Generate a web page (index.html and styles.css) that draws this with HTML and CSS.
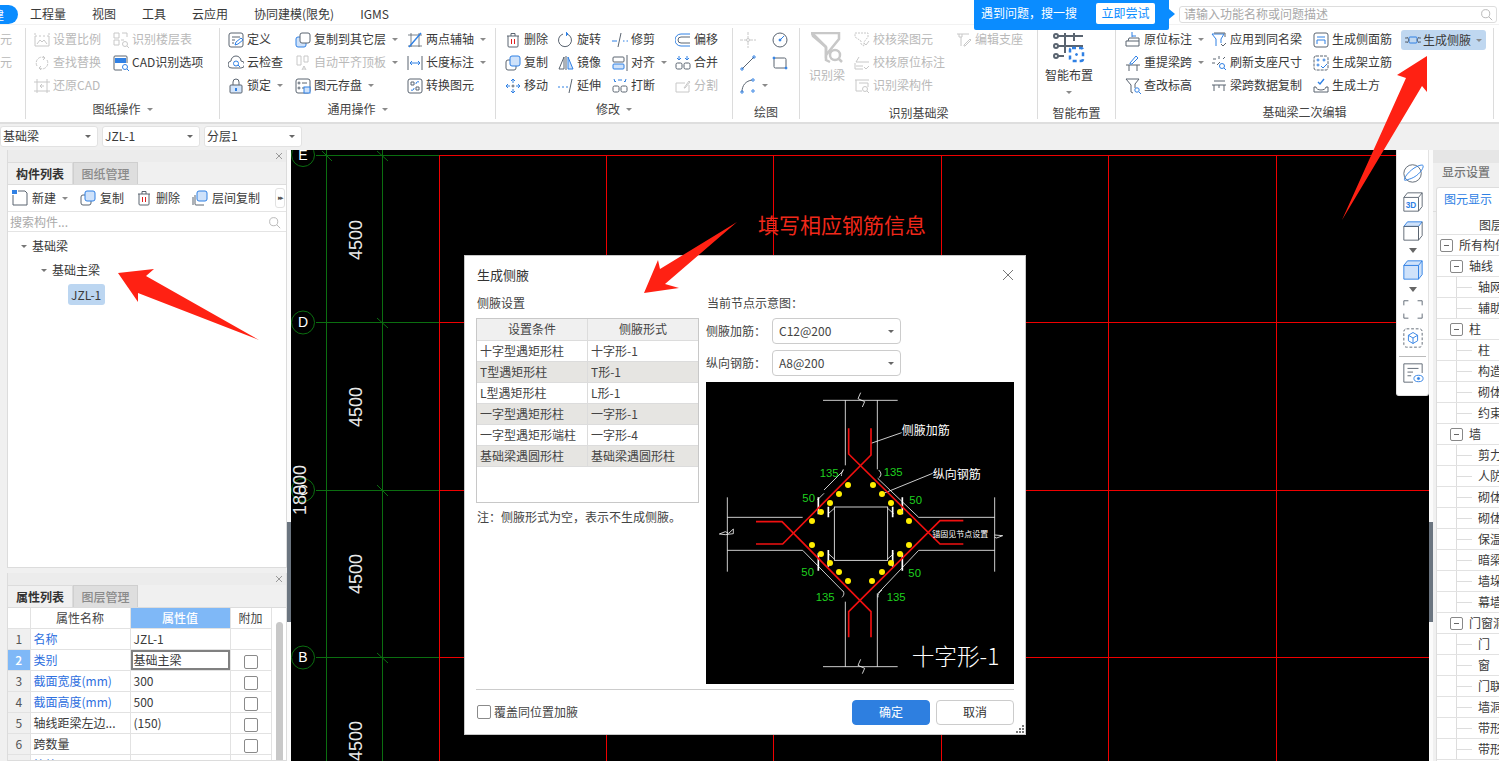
FILE: index.html
```html
<!DOCTYPE html>
<html lang="zh-CN">
<head>
<meta charset="utf-8">
<title>生成侧腋</title>
<link rel="stylesheet" href="styles.css">
</head>
<body>
<svg class="sprite" aria-hidden="true">
<defs>
<symbol id="scale" viewBox="0 0 16 16"><path d="M1 4h2M5 4h2M9 4h2M13 4h2M1 4v10h14V4M1 1v2M15 1v2"/><path d="M3 12l3-4 2 2 2-2 3 4"/></symbol>
<symbol id="layers" viewBox="0 0 16 16"><path d="M1 1h5v5H1zM9 1h5v4M1 8h5v5H1zM8 8h3"/><circle cx="12" cy="12" r="2.5"/><path d="M14 14l2 2"/></symbol>
<symbol id="findrep" viewBox="0 0 16 16"><path d="M3 11A6 6 0 0 1 8 2l2 1M13 5a6 6 0 0 1-5 9l-2-1" stroke-dasharray="3 1"/><path d="M9 1l2 2-2 2M7 11l-2 2 2 2"/></symbol>
<symbol id="restore" viewBox="0 0 16 16"><path d="M3 1v14M13 1v14M0 4h16M0 13h16"/><path d="M10 8H6l2-2M6 8l2 2"/></symbol>
<symbol id="autoalign" viewBox="0 0 16 16"><path d="M2 1h4v9H2zM9 1h4v6H9z"/><path d="M7 15l2-4 2 4M8 14h2"/></symbol>
<symbol id="split" viewBox="0 0 16 16"><path d="M1 5h9M1 5v9h13V7"/><path d="M9 10l5-7 1 1-5 6z"/></symbol>
<symbol id="ckbeam" viewBox="0 0 16 16"><path d="M1 1h13v4l-4 5v4l-3-2V9L1 5z" stroke-dasharray="2 1"/><path d="M10 11l2 2 3-4"/></symbol>
<symbol id="ckmark" viewBox="0 0 16 16"><path d="M5 2L2 7h13M1 8v6h8M2 11h7"/><path d="M10 12l2 2 3-3"/></symbol>
<symbol id="idbeam" viewBox="0 0 16 16"><path d="M1 2h14M2 2v11h6M5 5h9v4"/><circle cx="11" cy="11" r="2.5"/><path d="M13 13l2 2"/></symbol>
<symbol id="edsup" viewBox="0 0 16 16"><path d="M1 2h12M3 2v3h3V2M5 5v9"/><path d="M8 13l6-6 1 1-6 6H8z"/></symbol>
<symbol id="define" viewBox="0 0 16 16"><rect x="1" y="1" width="14" height="14" rx="2"/><path d="M4 5h8M4 8h3M4 11h2"/><path d="M7 13l1-3 5-4 2 2-5 4z" stroke="#2f80e4"/></symbol>
<symbol id="cloud" viewBox="0 0 16 16"><path d="M4 13a3.5 3.5 0 0 1-1-7 5 5 0 0 1 10 0 3.5 3.5 0 0 1 0 7z"/><circle cx="8" cy="8.500" r="2.500" stroke="#2f80e4"/><path d="M10 10l2 2" stroke="#2f80e4"/></symbol>
<symbol id="lock" viewBox="0 0 16 16"><rect x="2" y="7" width="12" height="8" rx="1" fill="#d3e5fb"/><path d="M5 7V4a3 3 0 0 1 6 0v3"/><rect x="7" y="10" width="2" height="3" fill="#2f80e4" stroke="none"/></symbol>
<symbol id="copyl" viewBox="0 0 16 16"><rect x="1" y="5" width="10" height="10" rx="2" fill="#cfe2fa" stroke="#2f80e4"/><rect x="5" y="1" width="10" height="10" rx="2" fill="#fff"/></symbol>
<symbol id="save" viewBox="0 0 16 16"><rect x="1" y="1" width="14" height="14" rx="2"/><circle cx="4" cy="5" r="1"/><path d="M7 5h5"/><circle cx="4" cy="10" r="1"/><path d="M7 10h2"/><rect x="9" y="9" width="6" height="6" fill="#cfe2fa" stroke="#2f80e4"/></symbol>
<symbol id="twoax" viewBox="0 0 16 16"><path d="M1 3h14M1 14h14M4 1v14M12 1v14" stroke-width=".8"/><path d="M2 15L14 1" stroke="#2f80e4" stroke-width="1.400"/></symbol>
<symbol id="length" viewBox="0 0 16 16"><path d="M1 1v14M15 1v14"/><path d="M3 8h10M3 8l2-2M3 8l2 2M13 8l-2-2M13 8l-2 2" stroke="#2f80e4"/></symbol>
<symbol id="convert" viewBox="0 0 16 16"><rect x="1" y="1" width="14" height="14" rx="2"/><path d="M4 4h3v3H4zM9 9h3v3H9z"/><path d="M9 6a2 2 0 0 1 3-2M7 10a2 2 0 0 1-3 2" stroke="#2f80e4"/></symbol>
<symbol id="cadopt" viewBox="0 0 16 16"><path d="M9 15H2a1 1 0 0 1-1-1V2a1 1 0 0 1 1-1h11a1 1 0 0 1 1 1v6"/><rect x="2" y="3" width="11" height="5" fill="#2f80e4" stroke="none"/><circle cx="12" cy="12" r="2.500" stroke="#2f80e4"/><path d="M14 14l2 2" stroke="#2f80e4"/></symbol>
<symbol id="del" viewBox="0 0 16 16"><path d="M2 4h12M6 4V1.500h4V4M3 4v10a1 1 0 0 0 1 1h8a1 1 0 0 0 1-1V4"/><path d="M6.500 7v5M9.500 7v5" stroke="#e02020"/></symbol>
<symbol id="copy" viewBox="0 0 16 16"><rect x="1" y="5" width="10" height="10" rx="2" fill="#fff"/><rect x="5" y="1" width="10" height="10" rx="2" fill="#cfe2fa" stroke="#2f80e4"/></symbol>
<symbol id="copy2" viewBox="0 0 16 16"><path d="M3 5v9a1 1 0 0 0 1 1h8M1 7v8"/><rect x="5" y="1" width="10" height="10" rx="2" fill="#cfe2fa" stroke="#2f80e4"/></symbol>
<symbol id="move" viewBox="0 0 16 16"><g stroke="#2f80e4"><path d="M8 1v4M8 11v4M1 8h4M11 8h4M6 3l2-2 2 2M6 13l2 2 2-2M3 6L1 8l2 2M13 6l2 2-2 2"/></g><circle cx="8" cy="8" r="1"/></symbol>
<symbol id="rotate" viewBox="0 0 16 16"><path d="M9 2a6.500 6.500 0 1 1-4 0" /><path d="M8 0l2 2-2 2" fill="#2f80e4" stroke="#2f80e4"/></symbol>
<symbol id="mirror" viewBox="0 0 16 16"><path d="M1 14L6 2v12z"/><path d="M10 2l5 12h-5z" fill="#cfe2fa" stroke="#2f80e4"/><path d="M8 1v14"/></symbol>
<symbol id="extend" viewBox="0 0 16 16"><path d="M0 9h2M4 9h2M8 9h2" stroke="#2f80e4"/><path d="M11 15l3-14"/></symbol>
<symbol id="trim" viewBox="0 0 16 16"><path d="M0 9h5M11 9h1.500M14.500 9h1.500" stroke="#2f80e4"/><path d="M6 15l3-14"/></symbol>
<symbol id="align" viewBox="0 0 16 16"><path d="M15 0v16"/><rect x="1" y="2" width="11" height="5" rx="1"/><rect x="1" y="9" width="11" height="5" rx="1" fill="#cfe2fa" stroke="#2f80e4"/></symbol>
<symbol id="brk" viewBox="0 0 16 16"><path d="M2 1l1 3 1-1M14 1l-1 3-1-1M7 1v2M9 1v2" stroke="#2f80e4"/><rect x="1" y="8" width="6" height="6" rx="1.500"/><rect x="9" y="8" width="6" height="6" rx="1.500"/></symbol>
<symbol id="merge" viewBox="0 0 16 16"><path d="M4 1v4M2 3l2 2 2-2M12 1v4M10 3l2 2 2-2" stroke="#2f80e4"/><rect x="1" y="8" width="6" height="6" rx="1.500"/><rect x="9" y="8" width="6" height="6" rx="1.500"/></symbol>
<symbol id="offset" viewBox="0 0 16 16"><path d="M15 2H6a6 6 0 0 0 0 12h9" stroke="#2f80e4"/><path d="M15 5H6a3 3 0 0 0 0 6h9"/></symbol>
<symbol id="pt" viewBox="0 0 16 16"><path d="M0 8h6M10 8h6M8 0v6M8 10v6" stroke-dasharray="3 1"/><circle cx="8" cy="8" r="1.500"/></symbol>
<symbol id="circ" viewBox="0 0 16 16"><circle cx="8" cy="8" r="7"/><path d="M8 8l4-4" stroke="#2f80e4"/><circle cx="8" cy="8" r="1" fill="#2f80e4" stroke="#2f80e4"/></symbol>
<symbol id="line" viewBox="0 0 16 16"><path d="M2 14L14 2"/><circle cx="2" cy="14" r="1.200" stroke="#2f80e4"/><circle cx="14" cy="2" r="1.200" stroke="#2f80e4"/></symbol>
<symbol id="rect" viewBox="0 0 16 16"><rect x="2" y="3" width="12" height="10" rx="1.500"/><circle cx="2" cy="3" r="1" fill="#2f80e4" stroke="#2f80e4"/><circle cx="14" cy="13" r="1" fill="#2f80e4" stroke="#2f80e4"/></symbol>
<symbol id="arc" viewBox="0 0 16 16"><path d="M2 14C2 7 6 3 12 2"/><circle cx="2" cy="14" r="1.200" stroke="#2f80e4"/><circle cx="13" cy="2" r="1.200" stroke="#2f80e4"/><circle cx="13" cy="13" r="1.200" stroke="#2f80e4"/></symbol>
<symbol id="funnel" viewBox="0 0 32 32"><path d="M1 1h27v6L15 23v-8L2 4z" stroke-width="2.500"/><path d="M15 15v13l4 2M1 1l14 14" stroke-width="2.500"/><circle cx="24" cy="23" r="5" stroke-width="2.500"/><path d="M28 27l3 3" stroke-width="2.500"/></symbol>
<symbol id="smart" viewBox="0 0 32 32"><g stroke="#5a6470" stroke-width="2"><path d="M3 4h27M3 14h27M3 24h8M12 1v20M21 1v8"/><circle cx="3" cy="4" r="2" fill="#fff"/><circle cx="3" cy="14" r="2" fill="#fff"/><circle cx="3" cy="24" r="2" fill="#fff"/></g><rect x="17" y="16" width="13" height="13" rx="2" stroke="#2f80e4" stroke-width="2.500" stroke-dasharray="4 3" fill="#fff"/><circle cx="23.500" cy="22.500" r="1" fill="#2f80e4" stroke="#2f80e4"/></symbol>
<symbol id="orig" viewBox="0 0 16 16"><path d="M1 9h13v5H1zM3 9l1-3h10v3"/><path d="M7 0v5M7 4h4" stroke="#2f80e4"/></symbol>
<symbol id="respan" viewBox="0 0 16 16"><path d="M1 10h14M4 10v6M12 10v6"/><path d="M5 8l6-7 2 2-6 6-2 0z" stroke="#2f80e4"/></symbol>
<symbol id="chkh" viewBox="0 0 16 16"><path d="M1 1h13l-4 5v4M1 1l5 6v7l2 1"/><circle cx="12" cy="12" r="2.200" stroke="#2f80e4"/><path d="M14 14l2 2" stroke="#2f80e4"/></symbol>
<symbol id="apply" viewBox="0 0 16 16"><path d="M1 2h12l-3 5v4M1 2l4 5v7" stroke="#2f80e4"/><path d="M3 1h11v4"/><path d="M10 12l2 2 3-3"/></symbol>
<symbol id="refresh" viewBox="0 0 16 16"><path d="M2 4h3M8 1v3M12 4l2-2M1 8h3M9 7l-3 3" /><circle cx="11" cy="11" r="2.500" stroke="#2f80e4"/><path d="M13 13l2 2" stroke="#2f80e4"/></symbol>
<symbol id="spancp" viewBox="0 0 16 16"><path d="M3 3h11M1 7h14M3 7v6M13 7v6M8 7v3"/></symbol>
<symbol id="sideb" viewBox="0 0 16 16"><rect x="1" y="1" width="14" height="14" rx="2"/><path d="M4 5h8M4 8h8v4M4 8v4" stroke="#2f80e4"/></symbol>
<symbol id="erect" viewBox="0 0 16 16"><rect x="1" y="1" width="14" height="14" rx="2" stroke-dasharray="3 1"/><circle cx="5" cy="5" r="1" stroke="#2f80e4"/><circle cx="11" cy="5" r="1" stroke="#2f80e4"/><circle cx="5" cy="10" r="1" stroke="#2f80e4"/><path d="M8 11l2 2 4-4" stroke="#2f80e4"/></symbol>
<symbol id="earth" viewBox="0 0 16 16"><path d="M1 9v5h14V9M1 9h2a5 3 0 0 0 10 0h2"/><path d="M5 4l2 2 4-5" stroke="#2f80e4" stroke-width="1.400"/></symbol>
<symbol id="hau" viewBox="0 0 16 16"><path d="M0 6h2M14 6h2M0 10h2M14 10h2"/><rect x="4" y="5" width="8" height="6" rx="1" stroke="#2f80e4"/><path d="M2 5l2 3-2 3M14 5l-2 3 2 3"/></symbol>
<symbol id="newi" viewBox="0 0 16 16"><path d="M1 5v10h14V3l-2-2H6"/><rect x="0" y="0" width="5" height="4" fill="#2f80e4" stroke="none"/></symbol>
<symbol id="mag" viewBox="0 0 16 16"><circle cx="7" cy="7" r="5"/><path d="M11 11l4 4"/></symbol>
<symbol id="xmark" viewBox="0 0 8 8"><path d="M1 1l6 6M7 1L1 7"/></symbol>
<symbol id="orb" viewBox="0 0 24 24"><circle cx="11.500" cy="12.500" r="9.500"/><path d="M3 20C1 18 8 9 16 5c4-2 7-2 7-1 1 3-5 11-13 14-3 1-6 2-7 2z" stroke="#2f80e4"/></symbol>
<symbol id="cube3d" viewBox="0 0 24 24"><path d="M2 7h16v15H2zM2 7l4-5h16v15l-4 5M18 7l4-5"/><text x="4" y="19" class="ictx">3D</text></symbol>
<symbol id="cubetop" viewBox="0 0 24 24"><path d="M2 7l4-5h16l-4 5z" fill="#cfe2fa" stroke="#2f80e4"/><path d="M2 7h16v15H2zM18 7v15l4-5V2"/></symbol>
<symbol id="cubefull" viewBox="0 0 24 24"><path d="M2 7h16v15H2z" fill="#cfe2fa"/><path d="M2 7l4-5h16l-4 5zM18 7v15l4-5V2" fill="#cfe2fa"/></symbol>
<symbol id="frame" viewBox="0 0 24 24"><path d="M2 8V3h5M17 3h5v5M22 17v5h-5M7 22H2v-5"/></symbol>
<symbol id="cubedash" viewBox="0 0 24 24"><rect x="2" y="2" width="20" height="20" rx="3" stroke-dasharray="3 2"/><path d="M12 6l5 3v6l-5 3-5-3V9zM7 9l5 3 5-3M12 12v6" stroke="#2f80e4"/></symbol>
<symbol id="listeye" viewBox="0 0 24 24"><path d="M22 12V2H2v20h10"/><path d="M6 7h12M6 11h6M6 15h4"/><ellipse cx="18" cy="18" rx="5" ry="3.500" stroke="#2f80e4"/><circle cx="18" cy="18" r="1.200" fill="#2f80e4" stroke="#2f80e4"/></symbol>
</defs>
</svg>

<div class="app">
  <header class="menubar">
    <span class="pill">建</span>
    <span>工程量</span><span>视图</span><span>工具</span><span>云应用</span><span>协同建模(限免)</span><span>IGMS</span>
    <div class="searchbox"><span>请输入功能名称或问题描述</span><svg class="ic mag"><use href="#mag"/></svg></div>
  </header>

  <section class="ribbon">
    <div class="group g0">
      <div class="g-body"><div class="tool off">元</div><div class="tool off">元</div></div>
    </div>
    <div class="group g1">
      <div class="g-body">
        <div class="tool off"><svg class="ic"><use href="#scale"/></svg>设置比例</div>
        <div class="tool off"><svg class="ic"><use href="#layers"/></svg>识别楼层表</div>
        <div class="tool off"><svg class="ic"><use href="#findrep"/></svg>查找替换</div>
        <div class="tool"><svg class="ic"><use href="#cadopt"/></svg>CAD识别选项</div>
        <div class="tool off"><svg class="ic"><use href="#restore"/></svg>还原CAD</div>
      </div>
      <div class="g-label">图纸操作<i class="caret"></i></div>
    </div>
    <div class="group g2">
      <div class="g-body">
        <div class="tool"><svg class="ic"><use href="#define"/></svg>定义</div>
        <div class="tool"><svg class="ic"><use href="#copyl"/></svg>复制到其它层<i class="caret"></i></div>
        <div class="tool"><svg class="ic"><use href="#twoax"/></svg>两点辅轴<i class="caret"></i></div>
        <div class="tool"><svg class="ic"><use href="#cloud"/></svg>云检查</div>
        <div class="tool off"><svg class="ic"><use href="#autoalign"/></svg>自动平齐顶板<i class="caret"></i></div>
        <div class="tool"><svg class="ic"><use href="#length"/></svg>长度标注<i class="caret"></i></div>
        <div class="tool"><svg class="ic"><use href="#lock"/></svg>锁定<i class="caret"></i></div>
        <div class="tool"><svg class="ic"><use href="#save"/></svg>图元存盘<i class="caret"></i></div>
        <div class="tool"><svg class="ic"><use href="#convert"/></svg>转换图元</div>
      </div>
      <div class="g-label">通用操作<i class="caret"></i></div>
    </div>
    <div class="group g3">
      <div class="g-body">
        <div class="tool"><svg class="ic"><use href="#del"/></svg>删除</div>
        <div class="tool"><svg class="ic"><use href="#rotate"/></svg>旋转</div>
        <div class="tool"><svg class="ic"><use href="#trim"/></svg>修剪</div>
        <div class="tool"><svg class="ic"><use href="#offset"/></svg>偏移</div>
        <div class="tool"><svg class="ic"><use href="#copy"/></svg>复制</div>
        <div class="tool"><svg class="ic"><use href="#mirror"/></svg>镜像</div>
        <div class="tool"><svg class="ic"><use href="#align"/></svg>对齐<i class="caret"></i></div>
        <div class="tool"><svg class="ic"><use href="#merge"/></svg>合并</div>
        <div class="tool"><svg class="ic"><use href="#move"/></svg>移动</div>
        <div class="tool"><svg class="ic"><use href="#extend"/></svg>延伸</div>
        <div class="tool"><svg class="ic"><use href="#brk"/></svg>打断</div>
        <div class="tool off"><svg class="ic"><use href="#split"/></svg>分割</div>
      </div>
      <div class="g-label">修改<i class="caret"></i></div>
    </div>
    <div class="group g4">
      <div class="g-body">
        <div class="tool off"><svg class="ic"><use href="#pt"/></svg></div>
        <div class="tool"><svg class="ic"><use href="#circ"/></svg></div>
        <div class="tool"><svg class="ic"><use href="#line"/></svg></div>
        <div class="tool"><svg class="ic"><use href="#rect"/></svg></div>
        <div class="tool"><svg class="ic"><use href="#arc"/></svg><i class="caret"></i></div>
      </div>
      <div class="g-label low">绘图</div>
    </div>
    <div class="group g5">
      <div class="g-row">
        <div class="bigtool off"><svg class="ic big"><use href="#funnel"/></svg><span>识别梁</span></div>
        <div class="g-body">
          <div class="tool off"><svg class="ic"><use href="#ckbeam"/></svg>校核梁图元</div>
          <div class="tool off"><svg class="ic"><use href="#edsup"/></svg>编辑支座</div>
          <div class="tool off"><svg class="ic"><use href="#ckmark"/></svg>校核原位标注</div>
          <div class="tool off wide"></div>
          <div class="tool off"><svg class="ic"><use href="#idbeam"/></svg>识别梁构件</div>
        </div>
      </div>
      <div class="g-label low">识别基础梁</div>
    </div>
    <div class="group g6">
      <div class="bigtool"><svg class="ic big"><use href="#smart"/></svg><span>智能布置</span><i class="caret"></i></div>
      <div class="g-label low">智能布置</div>
    </div>
    <div class="group g7">
      <div class="g-body">
        <div class="tool"><svg class="ic"><use href="#orig"/></svg>原位标注<i class="caret"></i></div>
        <div class="tool"><svg class="ic"><use href="#apply"/></svg>应用到同名梁</div>
        <div class="tool"><svg class="ic"><use href="#sideb"/></svg>生成侧面筋</div>
        <div class="tool sel"><svg class="ic"><use href="#hau"/></svg>生成侧腋<i class="caret"></i></div>
        <div class="tool"><svg class="ic"><use href="#respan"/></svg>重提梁跨<i class="caret"></i></div>
        <div class="tool"><svg class="ic"><use href="#refresh"/></svg>刷新支座尺寸</div>
        <div class="tool"><svg class="ic"><use href="#erect"/></svg>生成架立筋</div>
        <div class="tool"></div>
        <div class="tool"><svg class="ic"><use href="#chkh"/></svg>查改标高</div>
        <div class="tool"><svg class="ic"><use href="#spancp"/></svg>梁跨数据复制</div>
        <div class="tool"><svg class="ic"><use href="#earth"/></svg>生成土方</div>
      </div>
      <div class="g-label low">基础梁二次编辑</div>
    </div>
  </section>

  <section class="combos">
    <div class="combo">基础梁<i class="caret dark"></i></div>
    <div class="combo">JZL-1<i class="caret dark"></i></div>
    <div class="combo">分层1<i class="caret dark"></i></div>
  </section>

  <main class="main">
    <aside class="left">
      <section class="panel p-top">
        <div class="p-head"><svg class="xm"><use href="#xmark"/></svg></div>
        <div class="tabs"><span class="tab on">构件列表</span><span class="tab">图纸管理</span></div>
        <div class="p-tools">
          <span class="pt"><svg class="ic"><use href="#newi"/></svg>新建<i class="caret"></i></span>
          <span class="pt"><svg class="ic"><use href="#copy"/></svg>复制</span>
          <span class="pt"><svg class="ic"><use href="#del"/></svg>删除</span>
          <span class="pt"><svg class="ic"><use href="#copy2"/></svg>层间复制</span>
          <span class="more">▸▸</span>
        </div>
        <div class="p-search"><span>搜索构件...</span><svg class="ic mag"><use href="#mag"/></svg></div>
        <ul class="tree">
          <li class="t1"><i class="caret dn"></i>基础梁</li>
          <li class="t2"><i class="caret dn"></i>基础主梁</li>
          <li class="t3"><span class="chip">JZL-1</span></li>
        </ul>
      </section>
      <section class="panel p-bot">
        <div class="p-head"><svg class="xm"><use href="#xmark"/></svg></div>
        <div class="tabs"><span class="tab on">属性列表</span><span class="tab">图层管理</span></div>
        <div class="prop-wrap">
          <table class="prop">
            <colgroup><col class="c-n"><col class="c-a"><col class="c-b"><col class="c-c"></colgroup>
            <tr><th></th><th>属性名称</th><th class="hl">属性值</th><th>附加</th></tr>
            <tr><td class="n">1</td><td class="bl">名称</td><td>JZL-1</td><td></td></tr>
            <tr><td class="n hl">2</td><td class="bl">类别</td><td class="edit">基础主梁</td><td><i class="cb"></i></td></tr>
            <tr><td class="n">3</td><td class="bl">截面宽度(mm)</td><td>300</td><td><i class="cb"></i></td></tr>
            <tr><td class="n">4</td><td class="bl">截面高度(mm)</td><td>500</td><td><i class="cb"></i></td></tr>
            <tr><td class="n">5</td><td>轴线距梁左边...</td><td>(150)</td><td><i class="cb"></i></td></tr>
            <tr><td class="n">6</td><td>跨数量</td><td></td><td><i class="cb"></i></td></tr>
            <tr><td class="n">7</td><td class="bl">箍筋</td><td>#8@100/200(2)</td><td><i class="cb"></i></td></tr>
          </table>
          <div class="vbar"><div class="thumb"></div></div>
        </div>
      </section>
    </aside>

    <div class="center">
      <svg class="cad" viewBox="291 150 1138 611" width="1138" height="611">
        <g class="gr">
          <path d="M316 155.500H439M316 322.500H439M316 490.500H439M316 657.500H439M326.500 150V761M382.500 150V761"/>
          <path d="M322 151l10 10M377 151l11 10M377 318l11 10M377 485l11 11M377 653l11 10"/>
          <circle cx="303" cy="155" r="11.500"/><circle cx="303" cy="322.500" r="11.500"/><circle cx="303" cy="490" r="11.500"/><circle cx="303" cy="657.500" r="11.500"/>
        </g>
        <g class="rd">
          <path d="M439.500 155.500H1429M439.500 322.500H1429M439.500 490.500H1429M439.500 657.500H1429"/>
          <path d="M439.500 155V761M606.500 155V761M773.500 155V761M941.500 155V761M1108.500 155V761M1276.500 155V761"/>
        </g>
        <g class="axis">
          <text x="303" y="160">E</text><text x="303" y="327">D</text><text x="303" y="495">C</text><text x="303" y="662">B</text>
        </g>
        <g class="dim">
          <text transform="translate(361.500 240) rotate(-90)">4500</text>
          <text transform="translate(361.500 407) rotate(-90)">4500</text>
          <text transform="translate(361.500 574) rotate(-90)">4500</text>
          <text transform="translate(361.500 741) rotate(-90)">4500</text>
          <text transform="translate(305.500 490) rotate(-90)">18000</text>
        </g>
      </svg>
      <div class="handle h-left"></div>

      <div class="floatbar">
        <svg class="ic fb"><use href="#orb"/></svg>
        <svg class="ic fb"><use href="#cube3d"/></svg>
        <svg class="ic fb"><use href="#cubetop"/></svg>
        <i class="caret dark"></i>
        <svg class="ic fb blue"><use href="#cubefull"/></svg>
        <i class="caret dark"></i>
        <svg class="ic fb"><use href="#frame"/></svg>
        <svg class="ic fb"><use href="#cubedash"/></svg>
        <hr>
        <svg class="ic fb last"><use href="#listeye"/></svg>
      </div>

      <div class="dialog">
        <div class="d-title"><span>生成侧腋</span><svg class="d-x" viewBox="0 0 12 12"><path d="M1 1l10 10M11 1L1 11"/></svg></div>
        <div class="d-body">
          <div class="d-left">
            <div class="d-cap">侧腋设置</div>
            <div class="d-tablebox">
              <table class="haunch">
                <tr><th>设置条件</th><th>侧腋形式</th></tr>
                <tr><td>十字型遇矩形柱</td><td>十字形-1</td></tr>
                <tr class="alt"><td>T型遇矩形柱</td><td>T形-1</td></tr>
                <tr><td>L型遇矩形柱</td><td>L形-1</td></tr>
                <tr class="alt"><td>一字型遇矩形柱</td><td>一字形-1</td></tr>
                <tr><td>一字型遇矩形端柱</td><td>一字形-4</td></tr>
                <tr class="alt"><td>基础梁遇圆形柱</td><td>基础梁遇圆形柱</td></tr>
              </table>
            </div>
            <p class="d-note">注<span class="pn">：</span>侧腋形式为空<span class="pn">，</span>表示不生成侧腋。</p>
          </div>
          <div class="d-right">
            <div class="d-cap">当前节点示意图<span class="pn">：</span></div>
            <div class="d-field"><label>侧腋加筋<span class="pn">：</span></label><div class="d-select">C12@200<i class="caret dark"></i></div></div>
            <div class="d-field"><label>纵向钢筋<span class="pn">：</span></label><div class="d-select">A8@200<i class="caret dark"></i></div></div>
            <svg class="node" viewBox="18 6 924 906" width="308" height="302">
              <rect x="18" y="6" width="924" height="906" fill="#000"/>
              <g class="w">
                <path d="M369 61H593M369 860H593M436 61V256M532 61V268M436 665V860M532 640V860M82 352V575M884 352V575M82 412H308M82 511H308M656 412H884M656 511H884"/>
                <path d="M482 38l-8 18 20 9-7 16M482 838l-8 18 20 9-7 16M58 462l18-7 10 5 14-13v14l-24 3zM884 465l24 2-18 7-6-2"/>
                <rect x="403" y="381" width="160" height="160"/>
                <path d="M533 295L656 412M430 272L372 330M308 511L430 635M656 511L534 640M372 340l-20 20M403 385l-18 16M403 537l-18-16M563 385l18 16M563 537l18-16"/>
                <path d="M430 268c-4 8-6 14-6 20M536 270c8 8 10 16 0 24M428 632c6 6 4 14 -2 20M546 630c-8 6-14 14-12 22"/>
                <path d="M513 190L605 158M546 342L698 280"/>
              </g>
              <g class="wb"><path d="M355 352V403M385 380V412M607 352V403M578 380V412M355 520V572M385 510V560M607 520V572M578 510V560"/></g>
              <g class="r">
                <path d="M446 145V222L720 492H790"/>
                <path d="M513 145V225L248 492H168"/>
                <path d="M168 425H246L513 695V772"/>
                <path d="M790 422H720L446 695V772"/>
              </g>
              <g class="y">
                <circle cx="444" cy="315" r="9"/><circle cx="417" cy="342" r="9"/><circle cx="390" cy="369" r="9"/><circle cx="363" cy="396" r="9"/><circle cx="336" cy="423" r="9"/>
                <circle cx="519" cy="315" r="9"/><circle cx="546" cy="342" r="9"/><circle cx="573" cy="369" r="9"/><circle cx="600" cy="396" r="9"/><circle cx="627" cy="423" r="9"/>
                <circle cx="336" cy="495" r="9"/><circle cx="363" cy="522" r="9"/><circle cx="390" cy="549" r="9"/><circle cx="417" cy="576" r="9"/><circle cx="444" cy="603" r="9"/>
                <circle cx="627" cy="495" r="9"/><circle cx="600" cy="522" r="9"/><circle cx="573" cy="549" r="9"/><circle cx="546" cy="576" r="9"/><circle cx="516" cy="603" r="9"/>
              </g>
              <g class="lg">
                <text x="359" y="291">135</text><text x="551" y="287">135</text><text x="347" y="662">135</text><text x="560" y="662">135</text>
                <text x="307" y="365">50</text><text x="628" y="371">50</text><text x="304" y="587">50</text><text x="625" y="590">50</text>
              </g>
              <text class="lw" x="605" y="165">侧腋加筋</text>
              <text class="lw" x="698" y="298">纵向钢筋</text>
              <text class="ls" x="697" y="471">锚固见节点设置</text>
              <text class="lb" x="635" y="855">十字形-1</text>
            </svg>
          </div>
        </div>
        <div class="d-foot">
          <label class="d-check"><i class="cb"></i>覆盖同位置加腋</label>
          <div class="d-btns"><button class="btn pri">确定</button><button class="btn">取消</button></div>
        </div>
        <div class="grip"></div>
      </div>
    </div>

    <div class="gutter"><div class="handle h-right"></div></div>

    <aside class="right">
      <div class="r-head"></div>
      <div class="r-title">显示设置</div>
      <div class="r-tabs"><span class="r-tab">图元显示</span></div>
      <div class="r-tree">
        <div class="r-row hd">图层设置</div>
        <div class="r-row lv0"><i class="box"></i>所有构件</div>
        <div class="r-row lv1"><i class="box"></i>轴线</div>
        <div class="r-row lf">轴网</div>
        <div class="r-row lf">辅助轴线</div>
        <div class="r-row lv1"><i class="box"></i>柱</div>
        <div class="r-row lf">柱</div>
        <div class="r-row lf">构造柱</div>
        <div class="r-row lf">砌体柱</div>
        <div class="r-row lf">约束边缘</div>
        <div class="r-row lv1"><i class="box"></i>墙</div>
        <div class="r-row lf">剪力墙</div>
        <div class="r-row lf">人防门框</div>
        <div class="r-row lf">砌体墙</div>
        <div class="r-row lf">砌体加筋</div>
        <div class="r-row lf">保温墙</div>
        <div class="r-row lf">暗梁</div>
        <div class="r-row lf">墙垛</div>
        <div class="r-row lf">幕墙</div>
        <div class="r-row lv1"><i class="box"></i>门窗洞</div>
        <div class="r-row lf">门</div>
        <div class="r-row lf">窗</div>
        <div class="r-row lf">门联窗</div>
        <div class="r-row lf">墙洞</div>
        <div class="r-row lf">带形窗</div>
        <div class="r-row lf">带形洞</div>
      </div>
    </aside>
  </main>

  <div class="promo">
    <span>遇到问题<span class="pn">，</span>搜一搜</span><button class="promo-btn">立即尝试</button>
  </div>

  <svg class="arrows" viewBox="0 0 1499 761" width="1499" height="761">
    <polygon points="118,273 154,269 146,276 259,340 138,293 138,302"/>
    <polygon points="644,293 658,260 660,269 737,222 665,284 679,288"/>
    <polygon points="1427,56 1397,75 1406,78 1342,220 1422,86 1427,92"/>
  </svg>
  <div class="callout">填写相应钢筋信息</div>
</div>
</body>
</html>
```
FILE: styles.css
```css
* { box-sizing: border-box; }
html, body { margin: 0; padding: 0; }
body {
  width: 1499px; height: 761px; overflow: hidden; background: #f0f0f0;
  font: 12px/1.2 "Noto Sans CJK SC", "Liberation Sans", sans-serif; color: #3a3a3a;
}
.sprite { position: absolute; width: 0; height: 0; }
.app { position: relative; width: 1499px; height: 761px; display: flex; flex-direction: column; overflow: hidden; }
i { font-style: normal; }
.pn { font-family: "Noto Sans CJK TC", sans-serif; }

.ic { width: 16px; height: 16px; flex: none; fill: none; stroke: #5a6470; stroke-width: 1; }
.ictx { font: 700 9px "Liberation Sans", sans-serif; fill: #2f80e4; stroke: none; }
.caret { display: inline-block; width: 0; height: 0; border: 3px solid transparent; border-top: 3.5px solid #8a8a8a; border-bottom: 0; margin-left: 6px; }
.caret.dark { border-top-color: #666; }

/* menu */
.menubar { height: 25px; flex: none; background: #fff; display: flex; align-items: center; gap: 26px; padding: 5px 2px 0 0; border-bottom: 1px solid #f2f2f2; }
.pill { width: 18px; height: 19px; margin-right: -14px; background: #0a8cff; color: #fff; border-radius: 0 10px 10px 0; text-indent: -8px; overflow: hidden; line-height: 19px; }
.searchbox { margin-left: auto; width: 318px; height: 17px; border: 1px solid #ddd; border-radius: 3px; background: #fff; color: #a8a8a8; display: flex; align-items: center; justify-content: space-between; padding: 0 3px 0 4px; font-size: 12px; }
.mag { stroke: #aaa; width: 13px; height: 13px; }

/* ribbon */
.ribbon { height: 99px; flex: none; background: #fff; display: flex; border-bottom: 2px solid #dedede; padding-top: 3px; align-items: stretch; }
.group { position: relative; display: flex; flex-direction: column; border-right: 1px solid #dcdcdc; margin-bottom: 3px; }
.g-body { display: grid; grid-auto-rows: 23px; height: 70px; align-content: start; }
.g-row { display: flex; height: 70px; }
.g-label { height: 23px; padding-top: 1px; flex: none; display: flex; align-items: center; justify-content: center; color: #444; }
.g-label.low { height: 24px; padding-top: 6px; }
.tool { display: flex; align-items: center; gap: 3px; white-space: nowrap; color: #3a3a3a; }
.tool .caret { margin-left: 3px; }
.tool.off { color: #b9b9b9; }
.off .ic { stroke: #c8c8c8; }
.g0 { width: 26px; }
.g0 .g-body { padding-left: 0; }
.g1 { width: 194px; } .g1 .g-body { grid-template-columns: 79px 1fr; padding-left: 8px; }
.g2 { width: 276px; } .g2 .g-body { grid-template-columns: 67px 112px 1fr; padding-left: 8px; }
.g3 { width: 237px; } .g3 .g-body { grid-template-columns: 53px 54px 63px 1fr; padding-left: 9px; }
.g4 { width: 67px; } .g4 .g-body { grid-template-columns: 32px 1fr; padding-left: 7px; }
.g5 { width: 238px; } .g5 .g-body { grid-template-columns: 102px 1fr; }
.g6 { width: 78px; }
.g7 { width: 378px; } .g7 .g-body { grid-template-columns: 86px 102px 88px 1fr; padding-left: 9px; }
.tool.sel { background: #bfd7f0; border-radius: 3px; padding-left: 4px; width: 85px; height: 20px; margin-top: 2px; gap: 2px; }
.bigtool { width: 54px; height: 70px; display: flex; flex-direction: column; align-items: center; flex: none; color: #3a3a3a; }
.bigtool.off { color: #b9b9b9; }
.big { width: 32px; height: 32px; margin-top: 4px; margin-bottom: 4px; stroke: #5a6470; }
.g6 .bigtool { width: 62px; white-space: nowrap; }
.g6 .bigtool .caret { margin: 9px 0 0; }

/* combos */
.combos { height: 26px; flex: none; display: flex; gap: 4px; align-items: center; background: #f0f0f0; padding-bottom: 2px; }
.combo { width: 98px; height: 21px; background: #fff; border: 1px solid #e2e2e2; border-radius: 3px; display: flex; align-items: center; justify-content: space-between; padding: 0 6px 0 2px; }

/* main */
.main { flex: 1; min-height: 0; display: flex; background: #f0f0f0; }
.left { width: 291px; flex: none; padding-left: 7px; padding-right: 4px; display: flex; flex-direction: column; gap: 5px; background: linear-gradient(90deg, #f0f0f0 287px, #fbfbfb 287px); }
.panel { background: #fff; border: 1px solid #dcdcdc; border-top: 0; display: flex; flex-direction: column; overflow: hidden; }
.p-top { height: 418px; flex: none; }
.p-bot { flex: 1; min-height: 0; }
.p-head { height: 12px; flex: none; background: #ececec; display: flex; justify-content: flex-end; align-items: center; padding-right: 3px; }
.xm { width: 8px; height: 8px; fill: none; stroke: #999; }
.tabs { height: 23px; flex: none; display: flex; background: #f0f0f0; border-bottom: 1px solid #dcdcdc; }
.tab { width: 65px; text-align: center; line-height: 21px; background: #dedede; color: #8a8a8a; font-weight: 500; border: 1px solid #cfcfcf; border-bottom: 0; }
.tab.on { background: #f0f0f0; color: #333; font-weight: 700; border-left: 0; border-color: #dcdcdc; }
.p-tools { height: 27px; flex: none; display: flex; align-items: center; gap: 12px; padding-left: 4px; border-bottom: 1px solid #e4e4e4; }
.pt { display: flex; flex: none; align-items: center; gap: 4px; white-space: nowrap; }
.pt .caret { margin-left: 2px; }
.more { margin-left: auto; margin-right: 1px; width: 10px; height: 20px; border: 1px solid #e2e2e2; border-radius: 3px; font: 7px/18px "Liberation Sans", sans-serif; color: #555; text-align: center; letter-spacing: -2px; overflow: hidden; }
.p-search { height: 20px; flex: none; display: flex; align-items: center; justify-content: space-between; padding: 1px 5px 0 2px; color: #aaa; border-bottom: 1px solid #e4e4e4; }
.tree { list-style: none; margin: 0; padding: 0; flex: 1; }
.tree li { display: flex; align-items: center; height: 24px; }
.tree .t1 { padding-left: 13px; margin-top: 3px; height: 23px; }
.tree .t2 { padding-left: 33px; }
.tree .t3 { padding-left: 60px; }
.caret.dn { margin: 0 5px 0 0; border-width: 3.500px 3px 0; border-top-color: #777; }
.chip { background: #bcd6f1; border-radius: 3px; padding: 0 3px; height: 21px; width: 37px; line-height: 21px; white-space: nowrap; }

.prop-wrap { flex: 1; min-height: 0; display: flex; overflow: hidden; }
.prop { border-collapse: collapse; table-layout: fixed; width: 263px; height: fit-content; flex: none; }
.c-n { width: 22px; } .c-a { width: 100px; } .c-b { width: 100px; } .c-c { width: 41px; }
.prop th, .prop td { height: 21px; padding: 0 3px; border: 1px solid #e2e2e2; border-top: 0; border-left: 0; font-weight: 400; white-space: nowrap; overflow: hidden; line-height: 20px; }
.prop th { height: 20px; text-align: center; color: #444; }
.prop .n { text-align: center; background: #f0f0f0; color: #555; }
.prop .hl { background: #7fb8f7; color: #fff; font-weight: 500; }
.prop .bl { color: #2e6fe0; }
.prop .edit { box-shadow: inset 0 0 0 2px #808080; }
.prop td:last-child { text-align: center; vertical-align: middle; }
.cb { display: inline-block; width: 14px; height: 14px; border: 1px solid #8a8a8a; border-radius: 2px; background: #fff; vertical-align: middle; flex: none; }
.vbar { flex: 1; padding: 14px 3px 0 4px; }
.thumb { height: 200px; background: #c8c8c8; border-radius: 4px; }

/* canvas */
.center { width: 1138px; flex: none; position: relative; background: #000; }
.cad { display: block; background: #000; shape-rendering: crispEdges; }
.cad .gr { fill: none; stroke: #0b6e10; }
.cad .gr circle { shape-rendering: auto; }
.cad .gr path:nth-child(2) { shape-rendering: auto; }
.cad .rd { fill: none; stroke: #f00000; }
.axis text { fill: #fff; font: 14px "Liberation Sans", sans-serif; text-anchor: middle; }
.dim text { fill: #e8e8e8; font: 18px "Liberation Sans", sans-serif; text-anchor: middle; }
.handle { position: absolute; background: #6b7580; }
.h-left { left: -4px; top: 372px; width: 4px; height: 100px; }
.gutter { width: 4px; flex: none; position: relative; background: #fbfbfb; }
.h-right { left: 0; top: 372px; width: 4px; height: 100px; }

.floatbar { position: absolute; left: 1105px; top: 0; width: 33px; height: 246px; background: #fff; border: 1px solid #e2e2e2; border-top: 0; border-radius: 0 0 3px 3px; display: flex; flex-direction: column; align-items: center; padding-top: 12px; gap: 7px; }
.floatbar .caret { margin: -1px 0; border-width: 5px 4px 0; }
.fb { width: 22px; height: 22px; }
.fb.blue { stroke: #2f80e4; }
.fb.last { margin-top: -2px; }
.floatbar hr { width: 27px; border: 0; border-top: 1px solid #bbb; margin: 0; }

/* dialog */
.dialog { position: absolute; left: 173px; top: 105px; width: 562px; height: 480px; background: #fff; border: 1px solid #c8c8c8; padding: 0 11px; display: flex; flex-direction: column; color: #444; }
.d-title { height: 39px; flex: none; display: flex; align-items: center; justify-content: space-between; padding: 0 0 2px 1px; font-size: 13px; color: #333; }
.d-x { width: 12px; height: 12px; fill: none; stroke: #777; }
.d-body { display: flex; gap: 7px; height: 395px; flex: none; border-bottom: 1px solid #ccc; }
.d-left { width: 223px; flex: none; }
.d-right { width: 308px; flex: none; }
.d-cap { height: 23px; padding-left: 1px; line-height: 16px; }
.d-tablebox { height: 185px; border: 1px solid #c8c8c8; }
.haunch { width: 100%; border-collapse: collapse; table-layout: fixed; }
.haunch th, .haunch td { height: 21px; padding: 0 3px; border: 1px solid #dcdcdc; border-top: 0; border-left: 0; font-weight: 400; color: #444; white-space: nowrap; overflow: hidden; line-height: 20px; }
.haunch th { background: #f0f0f0; text-align: center; }
.haunch th:last-child, .haunch td:last-child { border-right: 0; }
.haunch .alt td { background: #e6e5e2; }
.d-note { margin: 7px 0 0 1px; }
.d-field { height: 26px; margin-bottom: 6px; display: flex; align-items: center; }
.d-field label { width: 66px; flex: none; }
.d-select { width: 129px; height: 26px; border: 1px solid #ccc; border-radius: 4px; display: flex; align-items: center; justify-content: space-between; padding: 0 6px; }
.node { display: block; }
.node .w { fill: none; stroke: #fff; stroke-width: 2.400; }
.node .wb { fill: none; stroke: #fff; stroke-width: 5; }
.node .r { fill: none; stroke: #f01010; stroke-width: 5; }
.node .y { fill: #ffee00; }
.node .lg text { fill: #1fd01f; font: 34px "Liberation Sans", sans-serif; }
.node .lw { fill: #fff; font: 36px "Noto Sans CJK SC", sans-serif; }
.node .ls { fill: #fff; font: 24px "Noto Sans CJK SC", sans-serif; }
.node .lb { fill: #fff; font: 300 68px "Noto Sans CJK SC", sans-serif; }
.d-foot { flex: 1; display: flex; justify-content: space-between; align-items: center; padding-left: 1px; }
.d-check { display: flex; align-items: center; gap: 3px; color: #444; }
.d-btns { display: flex; gap: 6px; }
.btn { width: 78px; height: 25px; border: 1px solid #ccc; border-radius: 4px; background: #fff; font: inherit; color: #333; }
.btn.pri { background: #2e7fe0; border-color: #2e7fe0; color: #fff; }
.grip { position: absolute; right: 1px; bottom: 1px; width: 2px; height: 2px; background: #777; box-shadow: -3px 0 #777, -6px 0 #777, 0 -3px #777, -3px -3px #777, 0 -6px #777; }

/* right */
.right { flex: 1; min-width: 0; display: flex; flex-direction: column; background: #f0f0f0; overflow: hidden; }
.r-head { height: 13px; flex: none; background: #e6e6e6; }
.r-title { height: 24px; flex: none; padding-left: 9px; line-height: 18px; color: #777; font-weight: 500; white-space: nowrap; }
.r-tabs { height: 25px; flex: none; padding-left: 3px; border-bottom: 1px solid #ddd; }
.r-tab { display: block; width: 70px; height: 25px; background: #fff; border: 1px solid #ddd; border-bottom: 0; border-radius: 3px 3px 0 0; color: #2e80e4; padding-left: 7px; line-height: 21px; }
.r-tree { flex: 1; margin-left: 3px; background: #fff; border-left: 1px solid #ddd; }
.r-row { height: 21px; width: 70px; display: flex; align-items: center; white-space: nowrap; border-bottom: 1px solid #e2e2e2; color: #3a3a3a; overflow: hidden; }
.r-row.hd { padding: 5px 0 0 42px; height: 23px; }
.box { width: 13px; height: 13px; flex: none; border: 1px solid #888; border-radius: 2px; background: linear-gradient(#666, #666) center / 5px 1px no-repeat #fff; }
.lv0 { padding-left: 3px; } .lv0 .box { margin-right: 6px; }
.lv1 { padding-left: 13px; } .lv1 .box { margin-right: 6px; }
.lf { padding-left: 19px; background: linear-gradient(#ddd, #ddd) 19px 0 / 1px 100% no-repeat; }
.lf::before { content: ""; width: 16px; height: 1px; background: #ddd; margin-right: 6px; flex: none; }

/* overlays */
.promo { position: absolute; left: 974px; top: 0; width: 195px; height: 30px; background: #0a8cff; color: #fff; display: flex; align-items: center; padding: 0 14px 3px 7px; justify-content: space-between; border-radius: 0 0 2px 2px; }
.promo::after { content: ""; position: absolute; right: -6px; top: 9px; border: 5px solid transparent; border-left: 6px solid #0a8cff; border-right: 0; }
.promo-btn { width: 59px; height: 21px; border: 0; border-radius: 2px; background: #fff; color: #0a8cff; font: inherit; padding: 0; }
.arrows { position: absolute; left: 0; top: 0; pointer-events: none; }
.arrows polygon { fill: #ff2113; }
.callout { position: absolute; left: 758px; top: 210px; color: #f0281a; font-size: 21px; line-height: 28px; white-space: nowrap; }
```
